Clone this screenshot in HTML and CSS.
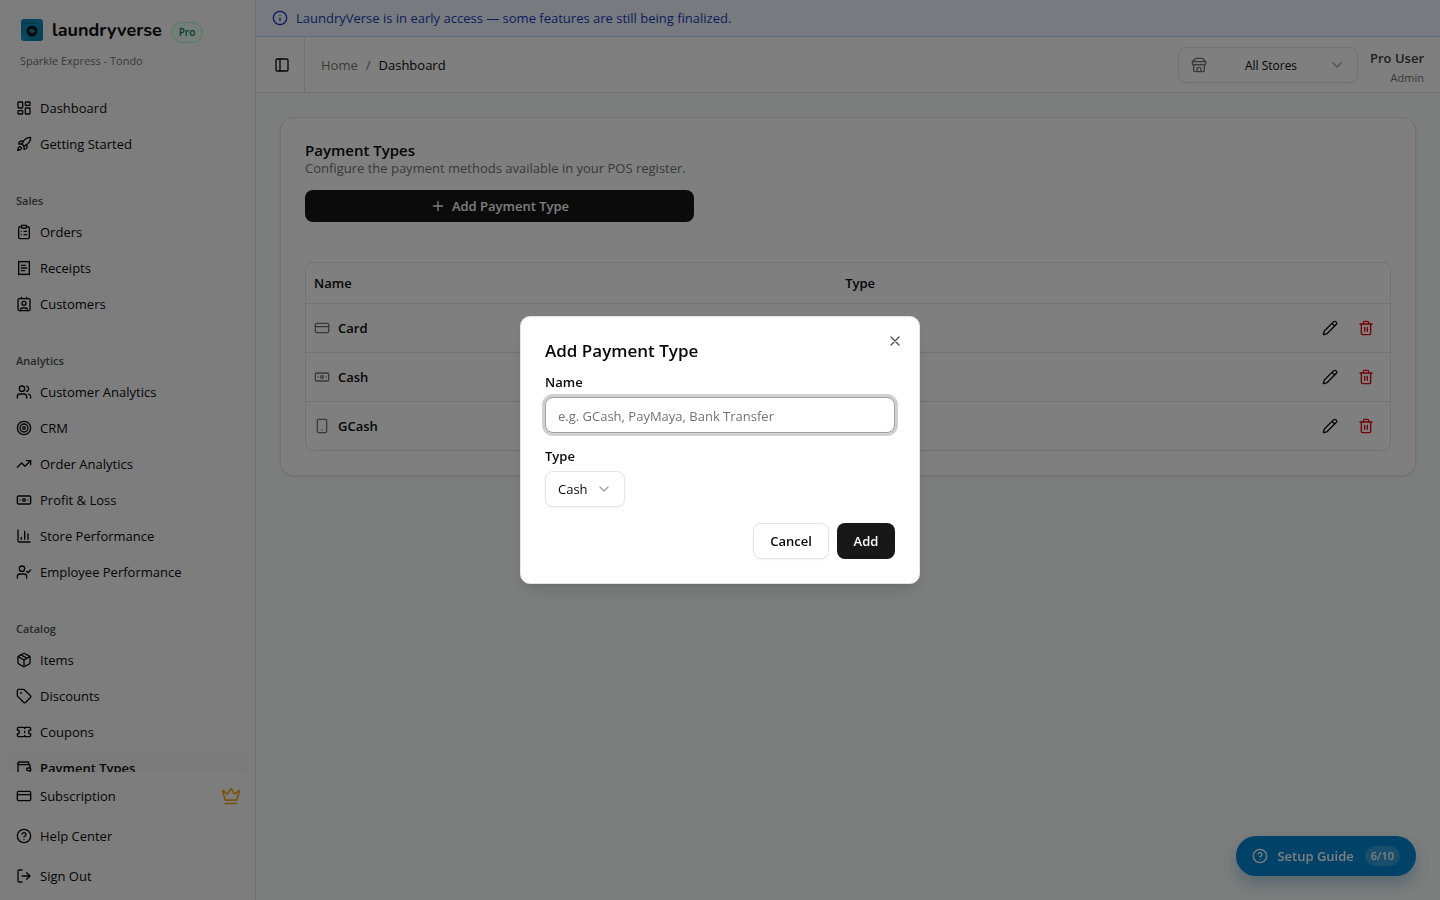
FILE: index.html
```html
<!DOCTYPE html>
<html lang="en">
<head>
<meta charset="utf-8">
<title>LaundryVerse - Payment Types</title>
<link rel="stylesheet" href="styles.css">
</head>
<body>
<svg class="sprite" aria-hidden="true">
  <symbol id="dash" viewBox="0 0 24 24"><rect x="3" y="3" width="7" height="9" rx="1"/><rect x="14" y="3" width="7" height="5" rx="1"/><rect x="14" y="12" width="7" height="9" rx="1"/><rect x="3" y="16" width="7" height="5" rx="1"/></symbol>
  <symbol id="rocket" viewBox="0 0 24 24"><path d="M4.5 16.5c-1.5 1.26-2 5-2 5s3.74-.5 5-2c.71-.84.7-2.13-.09-2.91a2.18 2.18 0 0 0-2.91-.09z"/><path d="m12 15-3-3a22 22 0 0 1 2-3.95A12.88 12.88 0 0 1 22 2c0 2.72-.78 7.5-6 11a22.35 22.35 0 0 1-4 2z"/><path d="M9 12H4s.55-3.03 2-4c1.62-1.08 5 0 5 0"/><path d="M12 15v5s3.03-.55 4-2c1.08-1.62 0-5 0-5"/></symbol>
  <symbol id="clip" viewBox="0 0 24 24"><rect x="8" y="2" width="8" height="4" rx="1"/><path d="M16 4h2a2 2 0 0 1 2 2v14a2 2 0 0 1-2 2H6a2 2 0 0 1-2-2V6a2 2 0 0 1 2-2h2"/><path d="M12 11h4M12 16h4M8 11h.01M8 16h.01"/></symbol>
  <symbol id="receipt" viewBox="0 0 24 24"><path d="M4 2v20l2-1 2 1 2-1 2 1 2-1 2 1 2-1 2 1V2l-2 1-2-1-2 1-2-1-2 1-2-1-2 1Z"/><path d="M14 8H8M16 12H8M13 16H8"/></symbol>
  <symbol id="contact" viewBox="0 0 24 24"><path d="M16 2v2M8 2v2M7 22v-2a2 2 0 0 1 2-2h6a2 2 0 0 1 2 2v2"/><circle cx="12" cy="11" r="3"/><rect x="3" y="4" width="18" height="18" rx="2"/></symbol>
  <symbol id="users" viewBox="0 0 24 24"><path d="M16 21v-2a4 4 0 0 0-4-4H6a4 4 0 0 0-4 4v2"/><circle cx="9" cy="7" r="4"/><path d="M22 21v-2a4 4 0 0 0-3-3.870M16 3.130a4 4 0 0 1 0 7.750"/></symbol>
  <symbol id="target" viewBox="0 0 24 24"><circle cx="12" cy="12" r="10"/><circle cx="12" cy="12" r="6"/><circle cx="12" cy="12" r="2"/></symbol>
  <symbol id="trend" viewBox="0 0 24 24"><path d="m22 7-8.500 8.500-5-5L2 17"/><path d="M16 7h6v6"/></symbol>
  <symbol id="cash" viewBox="0 0 24 24"><rect x="2" y="6" width="20" height="12" rx="2"/><circle cx="12" cy="12" r="2"/><path d="M6 12h.01M18 12h.01"/></symbol>
  <symbol id="bars" viewBox="0 0 24 24"><path d="M3 3v16a2 2 0 0 0 2 2h16M13 17V5M18 17V9M8 17v-3"/></symbol>
  <symbol id="usercheck" viewBox="0 0 24 24"><path d="m16 11 2 2 4-4M16 21v-2a4 4 0 0 0-4-4H6a4 4 0 0 0-4 4v2"/><circle cx="9" cy="7" r="4"/></symbol>
  <symbol id="box" viewBox="0 0 24 24"><path d="M11 21.730a2 2 0 0 0 2 0l7-4A2 2 0 0 0 21 16V8a2 2 0 0 0-1-1.730l-7-4a2 2 0 0 0-2 0l-7 4A2 2 0 0 0 3 8v8a2 2 0 0 0 1 1.730z"/><path d="M12 22V12M3.300 7 12 12l8.700-5M7.500 4.270l9 5.150"/></symbol>
  <symbol id="tag" viewBox="0 0 24 24"><path d="M12.586 2.586A2 2 0 0 0 11.172 2H4a2 2 0 0 0-2 2v7.172a2 2 0 0 0 .586 1.414l8.704 8.704a2.426 2.426 0 0 0 3.420 0l6.580-6.580a2.426 2.426 0 0 0 0-3.420z"/><circle cx="7.500" cy="7.500" r=".5"/></symbol>
  <symbol id="ticket" viewBox="0 0 24 24"><path d="M2 9a3 3 0 0 1 0 6v2a2 2 0 0 0 2 2h16a2 2 0 0 0 2-2v-2a3 3 0 0 1 0-6V7a2 2 0 0 0-2-2H4a2 2 0 0 0-2 2ZM13 5v2M13 17v2M13 11v2"/></symbol>
  <symbol id="wallet" viewBox="0 0 24 24"><path d="M19 7V4a1 1 0 0 0-1-1H5a2 2 0 0 0 0 4h15a1 1 0 0 1 1 1v4h-3a2 2 0 0 0 0 4h3a1 1 0 0 0 1-1v-2a1 1 0 0 0-1-1"/><path d="M3 5v14a2 2 0 0 0 2 2h15a1 1 0 0 0 1-1v-4"/></symbol>
  <symbol id="card" viewBox="0 0 24 24"><rect x="2" y="5" width="20" height="14" rx="2"/><path d="M2 10h20"/></symbol>
  <symbol id="help" viewBox="0 0 24 24"><circle cx="12" cy="12" r="10"/><path d="M9.090 9a3 3 0 0 1 5.830 1c0 2-3 3-3 3M12 17h.01"/></symbol>
  <symbol id="out" viewBox="0 0 24 24"><path d="m16 17 5-5-5-5M21 12H9M9 21H5a2 2 0 0 1-2-2V5a2 2 0 0 1 2-2h4"/></symbol>
  <symbol id="crown" viewBox="0 0 24 24"><path d="M11.562 3.266a.5.5 0 0 1 .876 0L15.390 8.870a1 1 0 0 0 1.516.294L21.183 5.500a.5.5 0 0 1 .798.519l-2.834 10.246a1 1 0 0 1-.956.734H5.810a1 1 0 0 1-.957-.734L2.020 6.020a.5.5 0 0 1 .798-.519l4.276 3.664a1 1 0 0 0 1.516-.294zM5 21h14"/></symbol>
  <symbol id="info" viewBox="0 0 24 24"><circle cx="12" cy="12" r="10"/><path d="M12 16v-4M12 8h.01"/></symbol>
  <symbol id="panel" viewBox="0 0 24 24"><rect x="3" y="3" width="18" height="18" rx="2"/><path d="M9 3v18"/></symbol>
  <symbol id="store" viewBox="0 0 24 24"><path d="m2 7 4.410-4.410A2 2 0 0 1 7.830 2h8.340a2 2 0 0 1 1.420.59L22 7M4 12v8a2 2 0 0 0 2 2h12a2 2 0 0 0 2-2v-8M15 22v-4a2 2 0 0 0-2-2h-2a2 2 0 0 0-2 2v4M2 7h20M22 7v3a2 2 0 0 1-2 2 2.700 2.700 0 0 1-1.590-.63.7.7 0 0 0-.82 0A2.700 2.700 0 0 1 16 12a2.700 2.700 0 0 1-1.590-.63.7.7 0 0 0-.82 0A2.700 2.700 0 0 1 12 12a2.700 2.700 0 0 1-1.590-.63.7.7 0 0 0-.82 0A2.700 2.700 0 0 1 8 12a2.700 2.700 0 0 1-1.590-.63.7.7 0 0 0-.82 0A2.700 2.700 0 0 1 4 12a2 2 0 0 1-2-2V7"/></symbol>
  <symbol id="down" viewBox="0 0 24 24"><path d="m6 9 6 6 6-6"/></symbol>
  <symbol id="plus" viewBox="0 0 24 24"><path d="M5 12h14M12 5v14"/></symbol>
  <symbol id="phone" viewBox="0 0 24 24"><rect x="5" y="2" width="14" height="20" rx="2"/><path d="M12 18h.01"/></symbol>
  <symbol id="pencil" viewBox="0 0 24 24"><path d="M21.174 6.812a1 1 0 0 0-3.986-3.987L3.842 16.174a2 2 0 0 0-.5.830l-1.321 4.352a.5.5 0 0 0 .623.622l4.353-1.320a2 2 0 0 0 .830-.497zM15 5l4 4"/></symbol>
  <symbol id="trash" viewBox="0 0 24 24"><path d="M3 6h18M19 6v14a2 2 0 0 1-2 2H7a2 2 0 0 1-2-2V6M8 6V4a2 2 0 0 1 2-2h4a2 2 0 0 1 2 2v2M10 11v6M14 11v6"/></symbol>
  <symbol id="x" viewBox="0 0 24 24"><path d="M18 6 6 18M6 6l12 12"/></symbol>
</svg>

<div class="app">
  <aside class="sidebar">
    <header class="brand">
      <div class="brand-row">
        <svg class="logo" viewBox="0 0 22 22" aria-hidden="true">
          <defs><linearGradient id="lg" x1="0" y1="0" x2="1" y2="1"><stop offset="0" stop-color="#0b80b0"/><stop offset=".5" stop-color="#1291bd"/><stop offset="1" stop-color="#0679a4"/></linearGradient></defs>
          <rect width="22" height="22" rx="3" fill="url(#lg)"/>
          <path d="M4 4.500h10M16 4.500h2" stroke="#0b6288" stroke-width="1"/>
          <circle cx="11" cy="12" r="5.500" fill="#0c161c"/>
          <circle cx="11" cy="12" r="2.500" fill="#145a70"/>
          <path d="M8.500 12q1.300-1.500 2.500 0t2.500 0" stroke="#3dc4c6" fill="none"/>
        </svg>
        <span class="wordmark">laundryverse</span>
        <span class="plan">Pro</span>
      </div>
      <p class="tenant">Sparkle Express - Tondo</p>
    </header>
    <nav class="menu">
      <a class="item" href="#"><svg class="icon"><use href="#dash"/></svg>Dashboard</a>
      <a class="item" href="#"><svg class="icon"><use href="#rocket"/></svg>Getting Started</a>
      <h2 class="group">Sales</h2>
      <a class="item" href="#"><svg class="icon"><use href="#clip"/></svg>Orders</a>
      <a class="item" href="#"><svg class="icon"><use href="#receipt"/></svg>Receipts</a>
      <a class="item" href="#"><svg class="icon"><use href="#contact"/></svg>Customers</a>
      <h2 class="group">Analytics</h2>
      <a class="item" href="#"><svg class="icon"><use href="#users"/></svg>Customer Analytics</a>
      <a class="item" href="#"><svg class="icon"><use href="#target"/></svg>CRM</a>
      <a class="item" href="#"><svg class="icon"><use href="#trend"/></svg>Order Analytics</a>
      <a class="item" href="#"><svg class="icon"><use href="#cash"/></svg>Profit &amp; Loss</a>
      <a class="item" href="#"><svg class="icon"><use href="#bars"/></svg>Store Performance</a>
      <a class="item" href="#"><svg class="icon"><use href="#usercheck"/></svg>Employee Performance</a>
      <h2 class="group">Catalog</h2>
      <a class="item" href="#"><svg class="icon"><use href="#box"/></svg>Items</a>
      <a class="item" href="#"><svg class="icon"><use href="#tag"/></svg>Discounts</a>
      <a class="item" href="#"><svg class="icon"><use href="#ticket"/></svg>Coupons</a>
      <a class="item active" href="#"><svg class="icon"><use href="#wallet"/></svg>Payment Types</a>
    </nav>
    <nav class="foot">
      <a class="item" href="#"><svg class="icon"><use href="#card"/></svg>Subscription<svg class="icon crown"><use href="#crown"/></svg></a>
      <a class="item" href="#"><svg class="icon"><use href="#help"/></svg>Help Center</a>
      <a class="item" href="#"><svg class="icon"><use href="#out"/></svg>Sign Out</a>
    </nav>
  </aside>

  <div class="content">
    <div class="banner"><svg class="icon"><use href="#info"/></svg><span>LaundryVerse is in early access — some features are still being finalized.</span></div>
    <header class="topbar">
      <button class="toggle" aria-label="Toggle sidebar"><svg class="icon"><use href="#panel"/></svg></button>
      <nav class="crumbs"><a href="#">Home</a><span>/</span><span class="here">Dashboard</span></nav>
      <div class="picker store">
        <svg class="icon"><use href="#store"/></svg>
        <select aria-label="Store"><option>All Stores</option></select>
        <svg class="icon chevron"><use href="#down"/></svg>
      </div>
      <div class="user"><strong>Pro User</strong><span>Admin</span></div>
    </header>
    <main class="main">
      <section class="card">
        <div class="card-head">
          <h1>Payment Types</h1>
          <p>Configure the payment methods available in your POS register.</p>
          <button class="primary wide"><svg class="icon"><use href="#plus"/></svg>Add Payment Type</button>
        </div>
        <div class="table-box">
          <table>
            <thead><tr><th class="col-name">Name</th><th>Type</th><th class="col-actions"></th></tr></thead>
            <tbody>
              <tr><td><div class="method"><svg class="icon"><use href="#card"/></svg>Card</div></td><td></td><td><div class="actions"><button aria-label="Edit Card"><svg class="icon"><use href="#pencil"/></svg></button><button class="danger" aria-label="Delete Card"><svg class="icon"><use href="#trash"/></svg></button></div></td></tr>
              <tr><td><div class="method"><svg class="icon"><use href="#cash"/></svg>Cash</div></td><td></td><td><div class="actions"><button aria-label="Edit Cash"><svg class="icon"><use href="#pencil"/></svg></button><button class="danger" aria-label="Delete Cash"><svg class="icon"><use href="#trash"/></svg></button></div></td></tr>
              <tr><td><div class="method"><svg class="icon"><use href="#phone"/></svg>GCash</div></td><td></td><td><div class="actions"><button aria-label="Edit GCash"><svg class="icon"><use href="#pencil"/></svg></button><button class="danger" aria-label="Delete GCash"><svg class="icon"><use href="#trash"/></svg></button></div></td></tr>
            </tbody>
          </table>
        </div>
      </section>
    </main>
  </div>
</div>

<button class="guide"><svg class="icon"><use href="#help"/></svg>Setup Guide<span class="count">6/10</span></button>

<div class="overlay">
  <form class="dialog" role="dialog" aria-labelledby="dialog-title">
    <button type="button" class="close" aria-label="Close"><svg class="icon"><use href="#x"/></svg></button>
    <h2 id="dialog-title">Add Payment Type</h2>
    <div class="field">
      <label for="name">Name</label>
      <input id="name" class="text" type="text" placeholder="e.g. GCash, PayMaya, Bank Transfer">
    </div>
    <div class="field">
      <label for="type">Type</label>
      <div class="picker type">
        <select id="type"><option>Cash</option></select>
        <svg class="icon chevron"><use href="#down"/></svg>
      </div>
    </div>
    <div class="dialog-foot">
      <button type="button" class="outline">Cancel</button>
      <button type="button" class="primary">Add</button>
    </div>
  </form>
</div>
</body>
</html>
```
FILE: styles.css
```css
* { box-sizing: border-box; }
body {
  margin: 0;
  font: 13px/20px "Open Sans", "Noto Sans", sans-serif;
  color: #0a0a0a;
  background: #fff;
}
h1, h2, p { margin: 0; }
a { color: inherit; text-decoration: none; }
button, input, select { font: inherit; color: inherit; margin: 0; }
button { cursor: pointer; border: 0; background: none; padding: 0; }
.sprite { display: none; }
.icon {
  width: 16px;
  height: 16px;
  flex: none;
  fill: none;
  stroke: currentColor;
  stroke-width: 2;
  stroke-linecap: round;
  stroke-linejoin: round;
}

.app { display: flex; height: 100vh; overflow: hidden; }

/* Sidebar */
.sidebar {
  width: 256px;
  flex: none;
  display: flex;
  flex-direction: column;
  background: #fafafa;
  border-right: 1px solid #e5e5e5;
}
.brand { padding: 14px 20px 19px; }
.brand-row { display: flex; align-items: center; height: 32px; padding-left: 1px; gap: 9px; }
.logo { width: 22px; height: 22px; flex: none; }
.wordmark { font: 700 18px/28px Nunito, "Open Sans", sans-serif; }
.plan {
  margin-top: 4px;
  padding: 0 7px;
  font-size: 10px;
  font-weight: 600;
  line-height: 19px;
  color: #047857;
  background: #ecfdf5;
  border: 1px solid #a4f4cf;
  border-radius: 11px;
}
.tenant { padding-top: 5px; font-size: 11px; line-height: 20px; color: #737373; }
.menu {
  flex: 1;
  min-height: 0;
  overflow: hidden auto;
  scrollbar-width: none;
  display: flex;
  flex-direction: column;
  gap: 4px;
  padding: 2px 8px 0;
}
.item {
  display: flex;
  align-items: center;
  gap: 8px;
  height: 32px;
  flex: none;
  padding: 0 8px;
  border-radius: 8px;
}
.item.active { background: #f5f5f5; font-weight: 600; }
.group {
  flex: none;
  padding: 26px 8px 0;
  font-size: 11px;
  line-height: 22px;
  font-weight: 600;
  color: #525252;
}
.foot { display: flex; flex-direction: column; gap: 8px; padding: 8px; }
.foot .item { padding-right: 6px; }
.crown { width: 20px; height: 20px; margin-left: auto; color: #f5a524; }

/* Page */
.content { flex: 1; min-width: 0; display: flex; flex-direction: column; }
.banner {
  display: flex;
  align-items: center;
  gap: 8px;
  padding: 8px 16px;
  color: #193cb8;
  background: #eff6ff;
  border-bottom: 1px solid #bedbff;
}
.topbar {
  display: flex;
  align-items: center;
  height: 56px;
  padding-right: 16px;
  border-bottom: 1px solid #e5e5e5;
}
.toggle {
  display: grid;
  place-items: center;
  align-self: stretch;
  width: 49px;
  padding-left: 4px;
  border-right: 1px solid #e5e5e5;
}
.crumbs { display: flex; gap: 8px; padding-left: 16px; color: #737373; }
.here { color: #0a0a0a; }
.picker {
  position: relative;
  display: flex;
  align-items: center;
  height: 36px;
  padding: 0 12px;
  gap: 8px;
  background: #fff;
  border: 1px solid #e5e5e5;
  border-radius: 8px;
  box-shadow: 0 1px 2px rgba(0, 0, 0, .05);
}
.picker select { appearance: none; border: 0; background: none; outline: 0; padding: 0; }
.picker .chevron { color: #a3a3a3; pointer-events: none; }
.store { width: 180px; margin-left: auto; color: #737373; }
.store select { flex: 1; min-width: 0; padding: 2px 0 0 6px; color: #0a0a0a; font-size: 12px; text-align: center; text-align-last: center; }
.user { display: flex; flex-direction: column; padding: 6px 0 0 12px; text-align: right; font-size: 11px; color: #737373; }
.user strong { font-size: 13px; font-weight: 600; color: #404040; }
.main { flex: 1; padding: 24px; background: #f9fbfa; }
.card {
  padding: 24px;
  background: #fff;
  border: 1px solid #e5e5e5;
  border-radius: 14px;
  box-shadow: 0 1px 3px rgba(0, 0, 0, .1);
}
.card-head { display: flex; flex-direction: column; width: fit-content; min-width: 389px; }
.card-head h1 { font-size: 15px; line-height: 16px; font-weight: 600; }
.card-head p { line-height: 20px; color: #737373; }
.primary {
  display: flex;
  align-items: center;
  justify-content: center;
  gap: 6px;
  min-width: 58px;
  height: 36px;
  padding: 0 16px;
  color: #fafafa;
  background: #171717;
  border-radius: 8px;
  font-weight: 600;
}
.wide { height: 32px; margin-top: 12px; }
.table-box { margin-top: 40px; border: 1px solid #e5e5e5; border-radius: 8px; }
table { width: 100%; border-collapse: collapse; table-layout: fixed; }
th { height: 40px; padding: 0 8px; text-align: left; font-weight: 600; }
td { height: 49px; padding: 0 8px; border-top: 1px solid #e5e5e5; font-weight: 600; }
.col-name { width: 49%; }
.col-actions { width: 84px; }
.method, .actions { display: flex; align-items: center; gap: 8px; }
.method .icon { color: #737373; }
.actions { justify-content: flex-end; gap: 4px; }
.actions button { display: grid; place-items: center; width: 32px; height: 32px; }
.actions .danger { color: #e7000b; }

.guide {
  position: fixed;
  right: 24px;
  bottom: 24px;
  display: flex;
  align-items: center;
  gap: 9px;
  height: 40px;
  padding: 0 16px;
  color: #fff;
  background: #0084d1;
  border-radius: 20px;
  font-weight: 600;
  box-shadow: 0 8px 16px rgba(0, 105, 168, .3);
}
.count {
  margin-left: 2px;
  padding: 0 6px;
  font-size: 11px;
  line-height: 20px;
  background: rgba(255, 255, 255, .2);
  border-radius: 10px;
}

/* Dialog */
.overlay {
  position: fixed;
  inset: 0;
  display: grid;
  place-items: center;
  background: rgba(0, 0, 0, .5);
}
.dialog {
  position: relative;
  display: grid;
  gap: 16px;
  width: 400px;
  padding: 24px;
  background: #fff;
  border: 1px solid #e5e5e5;
  border-radius: 10px;
  box-shadow: 0 10px 15px -3px rgba(0, 0, 0, .1), 0 4px 6px -4px rgba(0, 0, 0, .1);
}
.dialog h2 { padding-top: 2px; font-size: 17px; line-height: 16px; font-weight: 600; }
.close { position: absolute; top: 16px; right: 16px; width: 16px; height: 16px; color: #525252; }
.close .icon { display: block; }
.field { display: grid; gap: 8px; justify-items: start; }
.field label { line-height: 14px; font-weight: 600; }
.text {
  width: 100%;
  height: 36px;
  padding: 2px 12px 0;
  background: #fff;
  border: 1px solid #a1a1a1;
  border-radius: 8px;
  outline: 0;
  box-shadow: 0 0 0 3px #d0d0d0;
}
.text::placeholder { color: #737373; opacity: 1; }
.type { width: 80px; }
.type select { flex: 1; min-width: 0; }
.dialog-foot { display: flex; justify-content: flex-end; gap: 8px; }
.outline {
  min-width: 76px;
  height: 36px;
  padding: 0 16px;
  font-weight: 600;
  background: #fff;
  border: 1px solid #e5e5e5;
  border-radius: 8px;
  box-shadow: 0 1px 2px rgba(0, 0, 0, .05);
}
```
